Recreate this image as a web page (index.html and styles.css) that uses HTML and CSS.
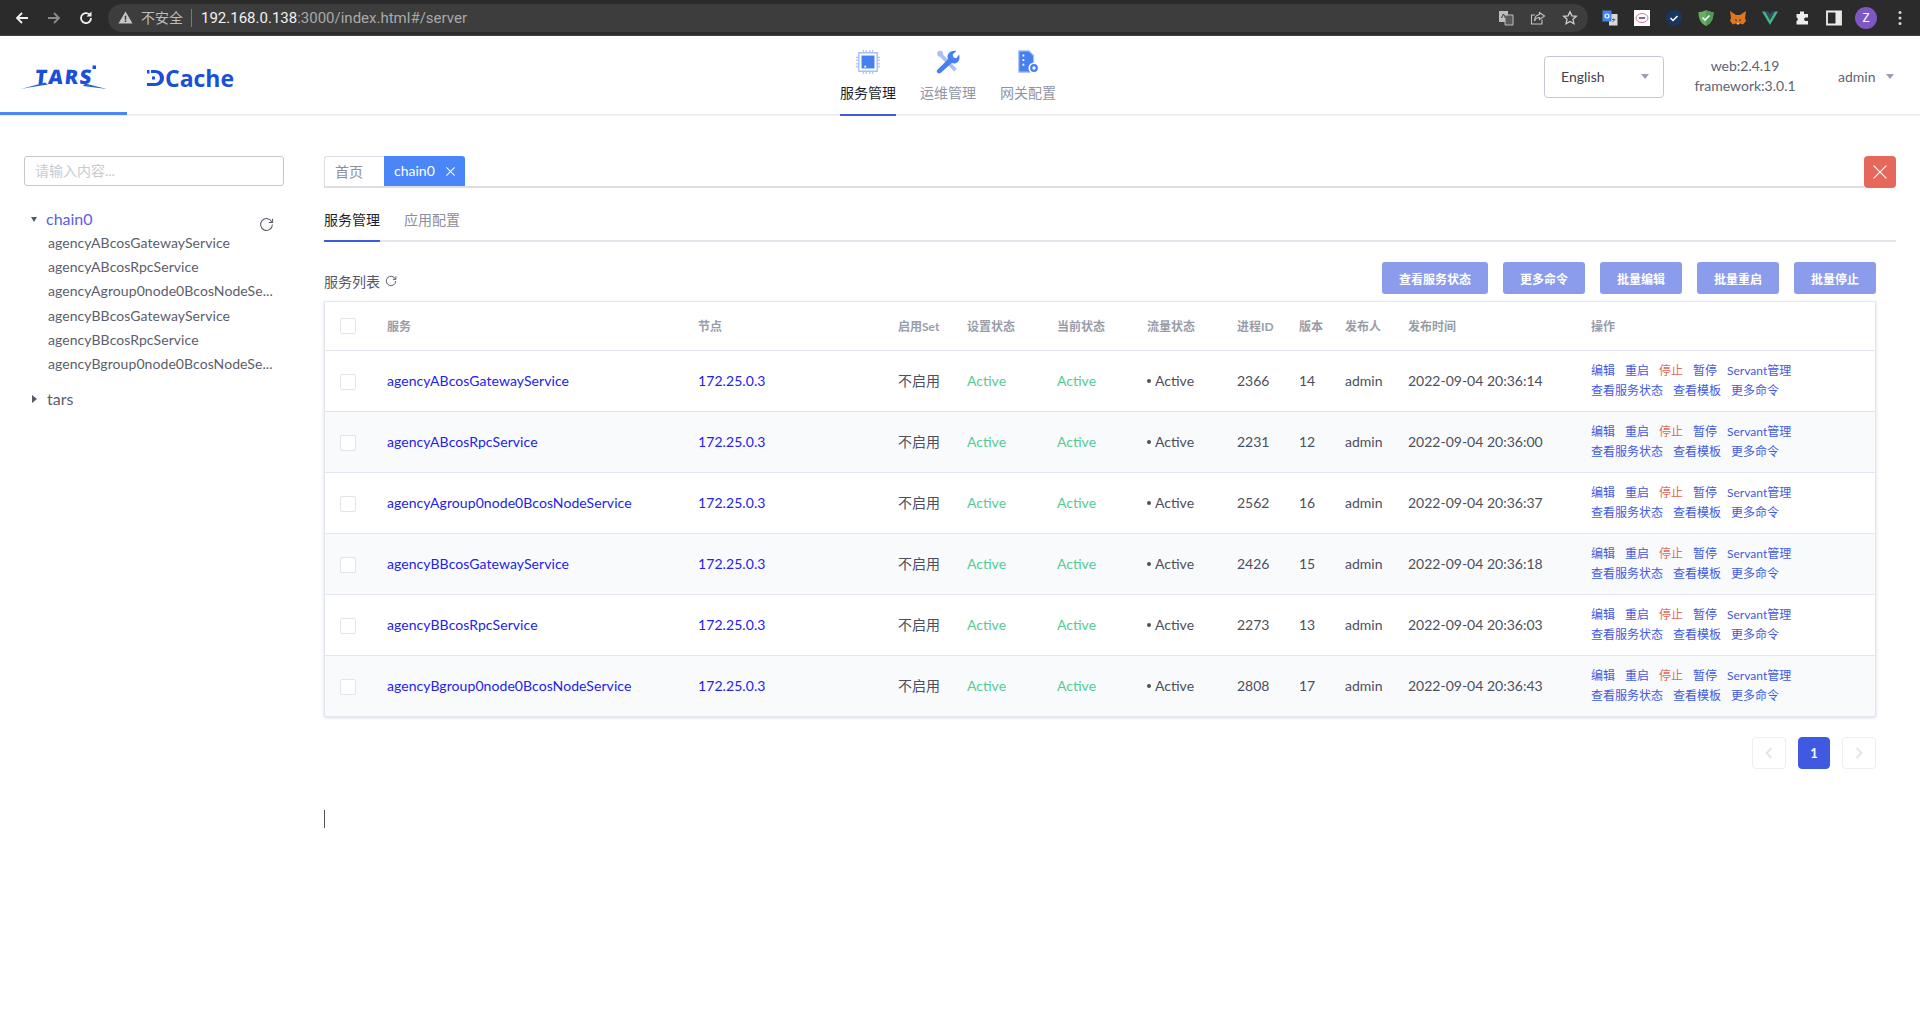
FILE: index.html
```html
<!DOCTYPE html>
<html lang="zh">
<head>
<meta charset="utf-8">
<title>TARS</title>
<link rel="stylesheet" href="styles.css">
</head>
<body>
<div class="chrome">
  <div class="chrome-nav">
    <svg class="cicon" viewBox="0 0 16 16"><path d="M14 8H3M8 3 3 8l5 5" fill="none" stroke="#f1f1f1" stroke-width="1.8"/></svg>
    <svg class="cicon" viewBox="0 0 16 16"><path d="M2 8h11M8 3l5 5-5 5" fill="none" stroke="#8a8a8a" stroke-width="1.8"/></svg>
    <svg class="cicon" viewBox="0 0 16 16"><path d="M13 8a5 5 0 1 1-1.6-3.6" fill="none" stroke="#f1f1f1" stroke-width="1.8"/><path d="M13.5 1.5v5h-5z" fill="#f1f1f1"/></svg>
  </div>
  <div class="omnibox">
    <svg class="warn" viewBox="0 0 16 16"><path d="M8 1.5 15.5 14.5H.5z" fill="#c7c7c7"/><path d="M7.2 6h1.6v4.5H7.2zM7.2 11.3h1.6v1.5H7.2z" fill="#3c3c3c"/></svg>
    <span class="insecure">不安全</span>
    <span class="url"><b>192.168.0.138</b>:3000/index.html#/server</span>
    <div class="omni-actions">
      <svg class="oicon" viewBox="0 0 16 16"><path d="M1 1h9v11H1z" fill="#bdbdbd"/><path d="M7 5h8v10H7z" fill="#5a5a5a" stroke="#bdbdbd"/><path d="M3.500 8 5.500 4l2 4" fill="none" stroke="#333"/></svg>
      <svg class="oicon" viewBox="0 0 16 16"><path d="M12 9.500v4.500H1.500V5H5" fill="none" stroke="#c4c4c4" stroke-width="1.100"/><path d="M9.500 2.500 14.500 6l-5 3.500V7.500C7 7.500 5.500 8.500 4.500 11c0-4 2-6 5-6.500z" fill="none" stroke="#c4c4c4" stroke-width="1.100"/></svg>
      <svg class="oicon" viewBox="0 0 16 16"><path d="m8 1.800 1.900 4 4.400.5-3.300 3 .9 4.400L8 11.500 4.100 13.700 5 9.300l-3.300-3 4.400-.5z" fill="none" stroke="#d0d0d0" stroke-width="1.300"/></svg>
    </div>
  </div>
  <div class="extensions">
    <svg class="ext" viewBox="0 0 16 16"><path d="M7 4h8.500v11.500H7z" fill="#d8d8d8"/><path d="M.5.500h9v11h-9z" fill="#4285f4"/><path d="M10 9.500h3M11.500 8.500v1M10.500 12l2.500-2.500" fill="none" stroke="#555" stroke-width=".9"/><circle cx="5" cy="6" r="2" fill="none" stroke="#fff" stroke-width="1.200"/></svg>
    <svg class="ext" viewBox="0 0 16 16"><path d="M0 0h16v16H0z" fill="#fff"/><ellipse cx="8" cy="8" rx="6" ry="4.500" fill="none" stroke="#c96a8a" stroke-width=".9"/><path d="M5 7h6v2H5z" fill="#7a6a9a"/></svg>
    <svg class="ext" viewBox="0 0 16 16"><circle cx="8" cy="8" r="8" fill="#17375e"/><path d="m4.500 8 2.500 2.500 4.500-4.500" fill="none" stroke="#fff" stroke-width="1.500"/></svg>
    <svg class="ext" viewBox="0 0 16 16"><path d="M8 0c2.500 1.500 5 2 7.500 2 0 6-1.500 11-7.500 14C2 13 .5 8 .5 2 3 2 5.500 1.500 8 0z" fill="#67ae5e"/><path d="M8 0c2.500 1.500 5 2 7.500 2 0 6-1.500 11-7.500 14z" fill="#4f9a58"/><path d="m4.500 7.500 2.500 2.500 4.500-4.500" fill="none" stroke="#fff" stroke-width="1.600"/></svg>
    <svg class="ext" viewBox="0 0 16 16"><path d="M0 1l6 4h4l6-4-1 7 1 3-3 3.500-2.500-1h-5L3 14.500 0 11l1-3z" fill="#e2761b"/><path d="M5 9 7 10 6 11.500zM11 9 9 10l1 1.500z" fill="#233447"/><path d="M6.500 13h3l-.5 1.500H7z" fill="#d7c1b3"/></svg>
    <svg class="ext" viewBox="0 0 16 16"><path d="M0 1.500h3.200L8 10l4.800-8.500H16L8 15z" fill="#41b883"/><path d="M3.200 1.500h3L8 4.600l1.800-3.100h3L8 10z" fill="#35495e"/></svg>
    <svg class="ext" viewBox="0 0 16 16"><path d="M6 1.500h4v2.500h4v3.500H11.500a1.800 1.800 0 0 0 0 3.500H14v3.500H2.500V11a1.800 1.800 0 0 0 0-3.500V4H6z" fill="#ededed"/></svg>
    <svg class="ext" viewBox="0 0 16 16"><path d="M1 1.500h14v13H1z" fill="none" stroke="#ededed" stroke-width="1.800"/><path d="M9.500 2h5v12h-5z" fill="#ededed"/></svg>
    <span class="avatar">Z</span>
    <svg class="menu-dots" viewBox="0 0 4 16"><circle cx="2" cy="2.500" r="1.500"/><circle cx="2" cy="8" r="1.500"/><circle cx="2" cy="13.500" r="1.500"/></svg>
  </div>
</div>

<header class="topbar">
  <div class="logo-tab">
    <div class="logo-tars">
      <span class="logo-tars-text">TARS</span>
      <svg class="logo-tars-wings" viewBox="0 0 86 24">
        <path d="M0 24 24 17.500 27 19.500 8 22.500zM86 24 64 18.500 62 21 76 22.800z" fill="#2a5ee0"/>
        <path d="M71.500.5h3.500v3.500h-3.500z" fill="#1a4fd8"/>
      </svg>
    </div>
  </div>
  <svg class="logo-dcache-mark" viewBox="0 0 18 16"><path d="M4 0h4c12 0 12 16 0 16H0v-3h8c6.500 0 6.500-10 0-10H4zM0 0h2.500v3.500H0zM5 6.500h3v3H5z" fill="#1a4fd8"/></svg>
  <span class="logo-dcache">Cache</span>
  <nav class="main-nav">
    <a class="nav-item active">
      <svg class="nav-icon" viewBox="0 0 26 26"><path d="M3 3h20v20H3z" fill="none" stroke="#a9c0f2" stroke-width="1.500"/><path d="M6 6h14v14H6z" fill="#467ff0"/><path d="M9 17h2v2H9z" fill="#fff"/><path d="M8 0v3M11 0v3M15 0v3M18 0v3M8 23v3M11 23v3M15 23v3M18 23v3M0 8h3M0 11h3M0 15h3M0 18h3M23 8h3M23 11h3M23 15h3M23 18h3" stroke="#a9c0f2" stroke-width="1.200"/></svg>
      <span>服务管理</span>
    </a>
    <a class="nav-item">
      <svg class="nav-icon" viewBox="0 0 26 26"><circle cx="4.500" cy="4" r="3.200" fill="#a9c0f2"/><path d="M5 5 21 22" stroke="#a9c0f2" stroke-width="4"/><path d="M1 22 13 10c-2-5 2-10 9-9l-4 4 1 3 3 1 3-4c2 7-3 11-8 9L5 25c-2 1.500-5-1-4-3z" fill="#467ff0"/></svg>
      <span>运维管理</span>
    </a>
    <a class="nav-item">
      <svg class="nav-icon" viewBox="0 0 26 26"><path d="M3 1h11l5 5v18H3z" fill="#467ff0" stroke="#a9c0f2" stroke-width="1.300"/><path d="M7 5h2v2H7zM7 10h2v2H7zM7 15h2v2H7z" fill="#fff"/><circle cx="19.500" cy="19.500" r="6" fill="#fff"/><circle cx="19.500" cy="19.500" r="3" fill="none" stroke="#467ff0" stroke-width="2.400"/></svg>
      <span>网关配置</span>
    </a>
  </nav>
  <div class="top-right">
    <div class="lang-select"><span>English</span><i class="caret"></i></div>
    <div class="versions"><div>web:2.4.19</div><div>framework:3.0.1</div></div>
    <div class="user"><span>admin</span><i class="caret"></i></div>
  </div>
</header>

<main class="page">
  <aside class="sidebar">
    <div class="search">请输入内容...</div>
    <div class="tree">
      <div class="tree-root open">
        <i class="caret small"></i><span class="tree-label">chain0</span>
        <svg class="tree-refresh" viewBox="0 0 16 16"><path d="M13.800 5.500A6.300 6.300 0 1 0 14.300 8" fill="none" stroke="#55596a" stroke-width="1.100"/><path d="M14.500 1.800v4h-4" fill="none" stroke="#55596a" stroke-width="1.100"/></svg>
      </div>
      <ul class="tree-list">
        <li>agencyABcosGatewayService</li>
        <li>agencyABcosRpcService</li>
        <li>agencyAgroup0node0BcosNodeSe...</li>
        <li>agencyBBcosGatewayService</li>
        <li>agencyBBcosRpcService</li>
        <li>agencyBgroup0node0BcosNodeSe...</li>
      </ul>
      <div class="tree-root closed"><i class="caret small right"></i><span class="tree-label plain">tars</span></div>
    </div>
  </aside>

  <section class="content">
    <div class="tabs-row">
      <div class="tabs-line">
        <span class="tab-home">首页</span>
        <span class="tab-current">chain0
          <svg class="x" viewBox="0 0 12 12"><path d="M1.500 1.500l9 9M10.500 1.500l-9 9" stroke="#fff" stroke-width="1.100"/></svg>
        </span>
      </div>
      <button class="close-all"><svg class="x big" viewBox="0 0 12 12"><path d="M.5.500l11 11M11.500.500l-11 11" stroke="#fff" stroke-width="1"/></svg></button>
    </div>

    <div class="subtabs">
      <span class="subtab active">服务管理</span>
      <span class="subtab">应用配置</span>
    </div>

    <div class="list-panel">
      <div class="list-head">
        <div class="list-title">服务列表
          <svg class="list-refresh" viewBox="0 0 16 16"><path d="M13.800 5.500A6.300 6.300 0 1 0 14.300 8" fill="none" stroke="#55596a" stroke-width="1.300"/><path d="M14.500 1.800v4h-4" fill="none" stroke="#55596a" stroke-width="1.300"/></svg>
        </div>
        <div class="batch">
          <button>查看服务状态</button><button>更多命令</button><button>批量编辑</button><button>批量重启</button><button>批量停止</button>
        </div>
      </div>

      <div class="table-wrap">
        <table>
          <colgroup>
            <col class="c-check"><col class="c-svc"><col class="c-node"><col class="c-set"><col class="c-st"><col class="c-st"><col class="c-st"><col class="c-pid"><col class="c-ver"><col class="c-pub"><col class="c-time"><col class="c-op">
          </colgroup>
          <thead>
            <tr><th class="cb"><i class="check"></i></th><th>服务</th><th>节点</th><th>启用Set</th><th>设置状态</th><th>当前状态</th><th>流量状态</th><th>进程ID</th><th>版本</th><th>发布人</th><th>发布时间</th><th>操作</th></tr>
          </thead>
          <tbody>
            <tr><td class="cb"><i class="check"></i></td><td><a class="link">agencyABcosGatewayService</a></td><td><a class="link">172.25.0.3</a></td><td class="cjk">不启用</td><td class="ok">Active</td><td class="ok">Active</td><td><span class="flow">Active</span></td><td>2366</td><td>14</td><td>admin</td><td>2022-09-04 20:36:14</td><td class="ops"><div><a>编辑</a><a>重启</a><a class="stop">停止</a><a>暂停</a><a>Servant管理</a></div><div><a>查看服务状态</a><a>查看模板</a><a>更多命令</a></div></td></tr>
            <tr><td class="cb"><i class="check"></i></td><td><a class="link">agencyABcosRpcService</a></td><td><a class="link">172.25.0.3</a></td><td class="cjk">不启用</td><td class="ok">Active</td><td class="ok">Active</td><td><span class="flow">Active</span></td><td>2231</td><td>12</td><td>admin</td><td>2022-09-04 20:36:00</td><td class="ops"><div><a>编辑</a><a>重启</a><a class="stop">停止</a><a>暂停</a><a>Servant管理</a></div><div><a>查看服务状态</a><a>查看模板</a><a>更多命令</a></div></td></tr>
            <tr><td class="cb"><i class="check"></i></td><td><a class="link">agencyAgroup0node0BcosNodeService</a></td><td><a class="link">172.25.0.3</a></td><td class="cjk">不启用</td><td class="ok">Active</td><td class="ok">Active</td><td><span class="flow">Active</span></td><td>2562</td><td>16</td><td>admin</td><td>2022-09-04 20:36:37</td><td class="ops"><div><a>编辑</a><a>重启</a><a class="stop">停止</a><a>暂停</a><a>Servant管理</a></div><div><a>查看服务状态</a><a>查看模板</a><a>更多命令</a></div></td></tr>
            <tr><td class="cb"><i class="check"></i></td><td><a class="link">agencyBBcosGatewayService</a></td><td><a class="link">172.25.0.3</a></td><td class="cjk">不启用</td><td class="ok">Active</td><td class="ok">Active</td><td><span class="flow">Active</span></td><td>2426</td><td>15</td><td>admin</td><td>2022-09-04 20:36:18</td><td class="ops"><div><a>编辑</a><a>重启</a><a class="stop">停止</a><a>暂停</a><a>Servant管理</a></div><div><a>查看服务状态</a><a>查看模板</a><a>更多命令</a></div></td></tr>
            <tr><td class="cb"><i class="check"></i></td><td><a class="link">agencyBBcosRpcService</a></td><td><a class="link">172.25.0.3</a></td><td class="cjk">不启用</td><td class="ok">Active</td><td class="ok">Active</td><td><span class="flow">Active</span></td><td>2273</td><td>13</td><td>admin</td><td>2022-09-04 20:36:03</td><td class="ops"><div><a>编辑</a><a>重启</a><a class="stop">停止</a><a>暂停</a><a>Servant管理</a></div><div><a>查看服务状态</a><a>查看模板</a><a>更多命令</a></div></td></tr>
            <tr><td class="cb"><i class="check"></i></td><td><a class="link">agencyBgroup0node0BcosNodeService</a></td><td><a class="link">172.25.0.3</a></td><td class="cjk">不启用</td><td class="ok">Active</td><td class="ok">Active</td><td><span class="flow">Active</span></td><td>2808</td><td>17</td><td>admin</td><td>2022-09-04 20:36:43</td><td class="ops"><div><a>编辑</a><a>重启</a><a class="stop">停止</a><a>暂停</a><a>Servant管理</a></div><div><a>查看服务状态</a><a>查看模板</a><a>更多命令</a></div></td></tr>
          </tbody>
        </table>
      </div>

      <div class="pager">
        <span class="page-btn"><svg viewBox="0 0 8 12"><path d="M6.500 1 1.500 6l5 5" fill="none" stroke="#e3e5ec" stroke-width="2"/></svg></span>
        <span class="page-btn current">1</span>
        <span class="page-btn"><svg viewBox="0 0 8 12"><path d="m1.500 1 5 5-5 5" fill="none" stroke="#e3e5ec" stroke-width="2"/></svg></span>
      </div>
      <div class="caret-line"></div>
    </div>
  </section>
</main>
</body>
</html>
```
FILE: styles.css
```css
* { box-sizing: border-box; }
html, body { margin: 0; padding: 0; }
body {
  background: #fff;
  font-family: Lato, "Noto Sans CJK SC", sans-serif;
  font-size: 14px;
  color: #4c4f5c;
  height: 1015px;
  overflow: hidden;
}
ul { list-style: none; margin: 0; padding: 0; }
button { font-family: inherit; border: 0; cursor: pointer; }

/* browser chrome */
.chrome {
  height: 36px;
  background: #2b2b2b;
  border-bottom: 1px solid #3f3f3f;
  display: flex;
  align-items: center;
  padding-left: 14px;
}
.chrome-nav { display: flex; gap: 16px; width: 94px; }
.cicon { width: 16px; height: 16px; }
.omnibox {
  width: 1480px;
  height: 28px;
  background: #3d3d3d;
  border-radius: 14px;
  display: flex;
  align-items: center;
  padding-left: 10px;
  font-family: Roboto, "Noto Sans CJK SC", sans-serif;
  font-size: 15px;
}
.warn { width: 15px; height: 15px; margin-right: 8px; }
.insecure {
  color: #bdbdbd;
  font-size: 14px;
  padding-right: 8px;
  margin-right: 9px;
  border-right: 1px solid #7a7a7a;
  line-height: 18px;
}
.url { color: #a9a9a9; }
.url b { color: #f1f1f1; font-weight: 400; }
.omni-actions { margin-left: auto; display: flex; gap: 16px; padding-right: 10px; }
.oicon { width: 16px; height: 16px; }
.extensions { display: flex; align-items: center; gap: 16px; margin-left: 14px; }
.ext { width: 16px; height: 16px; }
.avatar {
  width: 22px; height: 22px; border-radius: 50%;
  background: #7e57c2; color: #fff;
  font: 12px/22px Roboto, sans-serif; text-align: center;
  margin-left: -3px;
}
.menu-dots { width: 4px; height: 16px; fill: #d8d8d8; margin-left: 5px; }

/* top bar */
.topbar {
  height: 80px;
  border-bottom: 2px solid #eceef3;
  display: flex;
  align-items: center;
  position: relative;
}
.logo-tab {
  width: 127px;
  height: 80px;
  border-bottom: 3px solid #4a86f7;
  display: flex;
  align-items: center;
  justify-content: center;
  padding-top: 7px;
}
.logo-tars { width: 86px; height: 24px; position: relative; }
.logo-tars-text {
  display: block;
  font-family: "Open Sans", sans-serif;
  font-size: 20px;
  line-height: 24px;
  font-weight: 800;
  letter-spacing: 1.5px;
  text-align: center;
  color: #1a4fd8;
  transform: skewX(-6deg);
}
.logo-tars-wings { position: absolute; left: 0; top: 0; width: 86px; height: 24px; }
.logo-dcache-mark { width: 18px; height: 16px; margin-left: 20px; margin-top: 6px; flex: none; }
.logo-dcache {
  font-family: "Open Sans", sans-serif;
  font-size: 23px;
  font-weight: 700;
  color: #1a4fd8;
  margin-top: 6px;
}
.main-nav {
  position: absolute;
  left: 840px;
  top: 0;
  height: 80px;
  display: flex;
  gap: 24px;
}
.nav-item {
  width: 56px;
  height: 80px;
  display: flex;
  flex-direction: column;
  align-items: center;
  padding-top: 14px;
  color: #8f95a5;
  font-weight: 400;
  border-bottom: 2px solid transparent;
}
.nav-item span { margin-top: 9px; line-height: 20px; white-space: nowrap; }
.nav-item.active { color: #1c1f2b; border-bottom-color: #3f5ae0; }
.nav-icon { width: 24px; height: 24px; flex: none; }
.top-right {
  position: absolute;
  left: 1544px;
  top: 20px;
  display: flex;
  align-items: center;
}
.lang-select {
  width: 120px;
  height: 42px;
  border: 1px solid #c4c7d3;
  border-radius: 4px;
  display: flex;
  align-items: center;
  justify-content: space-between;
  padding: 0 14px 2px 16px;
  color: #3f4250;
}
.caret {
  width: 0; height: 0;
  border-left: 4px solid transparent;
  border-right: 4px solid transparent;
  border-top: 5px solid #9ba0b0;
  display: inline-block;
}
.versions { width: 162px; text-align: center; line-height: 20px; color: #5f6372; margin-top: -3px; }
.user { display: flex; align-items: center; gap: 10px; color: #5f6372; margin-left: 12px; padding-bottom: 2px; }

/* page */
.page { display: flex; padding: 40px 24px 0 24px; }
.sidebar { width: 300px; flex: none; }
.search {
  width: 260px;
  height: 30px;
  border: 1px solid #c4c7d3;
  border-radius: 3px;
  padding-left: 10px;
  color: #c8cad2;
  line-height: 27px;
}
.tree { margin-top: 20px; width: 250px; }
.tree-root { display: flex; align-items: center; height: 25px; position: relative; padding-left: 7px; }
.caret.small { border-left-width: 3.500px; border-right-width: 3.500px; border-top-color: #55596a; margin: 2px 9px 0 0; flex: none; }
.caret.small.right {
  border-top: 4px solid transparent; border-bottom: 4px solid transparent;
  border-left: 5px solid #55596a; border-right: 0;
  margin: 0 10px 0 1px;
}
.tree-label { color: #5a60e6; font-size: 16px; margin-top: -1px; }
.tree-label.plain { color: #5b5e6c; }
.tree-refresh { position: absolute; left: 235px; top: 0; width: 15px; height: 15px; margin-top: 11px; }
.tree-list li {
  height: 24.200px;
  line-height: 24px;
  padding-left: 24px;
  color: #5b5e6c;
  white-space: nowrap;
  letter-spacing: .07px;
}
.tree-root.closed { margin-top: 10px; }

.content { width: 1572px; flex: none; }
.tabs-row { display: flex; align-items: flex-end; height: 32px; }
.tabs-line {
  flex: 1;
  height: 32px;
  border-bottom: 2px solid #dcdee6;
  display: flex;
}
.tab-home {
  width: 60px;
  border: 1px solid #dcdee6;
  border-right: 0;
  border-bottom: 0;
  border-radius: 3px 0 0 0;
  padding-left: 10px;
  line-height: 30px;
  color: #8c8f9c;
}
.tab-current {
  width: 81px;
  background: #4a86f7;
  color: #fff;
  border-radius: 0 3px 0 0;
  padding-left: 10px;
  line-height: 30px;
  display: flex;
  align-items: center;
  gap: 10px;
}
.x { width: 11px; height: 11px; }
.x.big { width: 14px; height: 14px; display: block; margin: auto; }
.close-all {
  width: 32px;
  height: 32px;
  background: #e5685a;
  border-radius: 4px;
  padding: 0;
}
.subtabs {
  display: flex;
  gap: 24px;
  margin-top: 21px;
  height: 33px;
  border-bottom: 2px solid #e3e5ec;
}
.subtab { width: 56px; color: #8c8f9c; line-height: 22px; height: 33px; white-space: nowrap; }
.subtab.active { color: #1c1f2b; border-bottom: 2px solid #3f5ae0; }
.list-panel { width: 1552px; }
.list-head { display: flex; align-items: center; justify-content: space-between; height: 32px; margin-top: 20px; margin-bottom: 7px; }
.list-title { color: #55586a; display: flex; align-items: center; gap: 5px; margin-top: 6px; }
.list-refresh { width: 12px; height: 12px; }
.batch { display: flex; gap: 15px; }
.batch button {
  height: 32px;
  padding: 0 17px;
  background: #8c9cec;
  color: #fff;
  border-radius: 3px;
  font-size: 12px;
  font-weight: 700;
}
.table-wrap {
  border: 1px solid #e4e6ef;
  box-shadow: 0 1px 3px rgba(120,125,150,.28);
}
table { width: 100%; table-layout: fixed; border-collapse: collapse; }
.c-check { width: 47px; } .c-svc { width: 311px; } .c-node { width: 200px; } .c-set { width: 69px; }
.c-st { width: 90px; } .c-pid { width: 62px; } .c-ver { width: 46px; } .c-pub { width: 63px; } .c-time { width: 183px; } .c-op { width: 299px; }
th, td { padding: 0 0 0 15px; text-align: left; white-space: nowrap; }
th { height: 48px; font-size: 12px; font-weight: 700; color: #9a9da8; padding-bottom: 1px; }
td { height: 61px; border-top: 1px solid #e4e6ef; color: #4c4f5c; }
td.cjk { padding-bottom: 2px; }
tbody tr:nth-child(even) td { background: #f9fafc; }
.cb { padding-left: 15px; }
.check {
  display: block;
  width: 16px; height: 16px;
  border: 1px solid #e2e4ec;
  border-radius: 2px;
  background: #fff;
  margin-top: 2px;
}
.link { color: #2222ee; letter-spacing: .07px; }
.ok { color: #52cc94; }
.flow::before {
  content: "";
  display: inline-block;
  width: 4px; height: 4px;
  background: #4c4f5c;
  border-radius: 50%;
  margin-right: 4px;
  vertical-align: 3px;
}
.ops { font-size: 12px; line-height: 20px; color: #3f5ae0; }
.ops div { display: flex; gap: 10px; }
.ops .stop { color: #e5685a; }
.pager { display: flex; justify-content: flex-end; gap: 12px; margin-top: 20px; }
.page-btn {
  width: 34px;
  height: 32px;
  border: 1px solid #eceef3;
  border-radius: 4px;
  display: flex;
  align-items: center;
  justify-content: center;
}
.page-btn svg { width: 8px; height: 12px; }
.page-btn.current { width: 32px; background: #3f5ae0; border-color: #3f5ae0; color: #fff; font-weight: 700; font-size: 13px; }
.caret-line { width: 1px; height: 18px; background: #4c5560; margin-top: 41px; }
```
